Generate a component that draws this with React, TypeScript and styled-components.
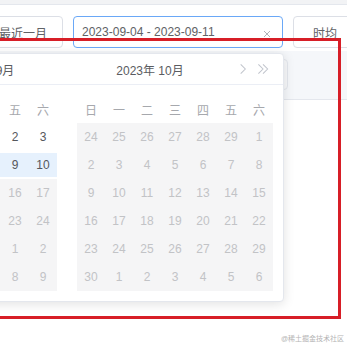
import React from "react";
import styled, { createGlobalStyle } from "styled-components";

const GlobalStyle = createGlobalStyle`
  html, body { margin: 0; padding: 0; background: #ffffff; }
  body {
    font-family: "Liberation Sans", "Noto Sans CJK SC", sans-serif;
    overflow: hidden;
  }
  * { box-sizing: border-box; }
`;

type CellState = "normal" | "muted" | "range" | "disabled" | "start" | "end";
type Side = "left" | "right";

const Page = styled.div`
  position: relative;
  width: 347px;
  height: 347px;
  overflow: hidden;
  background: #ffffff;
`;

const TopStrip = styled.div`
  height: 5px;
  background: #f2f3f5;
  border-bottom: 1px solid #e4e7ed;
`;

const Toolbar = styled.div`
  display: flex;
  align-items: center;
  gap: 10px;
  margin-left: -17px;
  padding-top: 11px;
  height: 43px;
  position: relative;
  z-index: 2;
`;

const Button = styled.button<{ $pad: number }>`
  height: 32px;
  padding: 0 ${(p) => p.$pad}px;
  border: 1px solid #dcdfe6;
  border-radius: 4px;
  background: #ffffff;
  color: #606266;
  font-family: inherit;
  font-size: 12px;
  white-space: nowrap;
  flex: none;
`;

const RangeField = styled.div`
  position: relative;
  width: 210px;
  height: 32px;
  flex: none;
  display: flex;
  align-items: center;
  padding: 0 8px;
  border: 1px solid #6aa8f7;
  border-radius: 4px;
  background: #ffffff;
  color: #606266;
  font-size: 12px;
`;

const RangeText = styled.span`
  flex: 1;
  white-space: nowrap;
`;

const ClearIcon = styled.svg`
  width: 8px;
  height: 8px;
  margin-right: 3px;
  margin-top: 4px;
  flex: none;
`;

const Popup = styled.div`
  position: absolute;
  top: 36px;
  left: -224px;
  width: 434px;
  display: flex;
  background: #ffffff;
  border: 1px solid #e4e7ed;
  border-radius: 4px;
  box-shadow: 0 2px 12px rgba(0, 0, 0, 0.12);
  z-index: 5;
`;

const Panel = styled.div`
  width: 216px;
  flex: none;
`;

const PanelHeader = styled.div<{ $side: Side }>`
  height: 31px;
  border-bottom: 1px solid #ebeef5;
  padding: 0 10px;
  display: grid;
  grid-template-columns: ${(p) => (p.$side === "left" ? "50px 1fr" : "1fr 50px")};
  align-items: center;
`;

const Title = styled.div`
  text-align: center;
  font-size: 12px;
  color: #5a5c61;
  white-space: nowrap;
`;

const Arrows = styled.div<{ $side: Side }>`
  display: flex;
  align-items: center;
  justify-content: ${(p) => (p.$side === "left" ? "flex-start" : "flex-end")};
  gap: 8px;
  padding: 0 4px;
`;

const ArrowIcon = styled.svg`
  width: 12px;
  height: 12px;
  flex: none;
`;

const PanelBody = styled.div`
  padding: 10px;
`;

const Grid = styled.div`
  display: grid;
  grid-template-columns: repeat(7, 28px);
  grid-auto-rows: 28px;
`;

const WeekDay = styled.div`
  display: flex;
  align-items: center;
  justify-content: center;
  font-size: 12px;
  color: #a6a8ad;
`;

const Cell = styled.div<{ $state: CellState }>`
  padding: 2px 0;
  background: ${(p) => (p.$state === "disabled" ? "#f5f5f6" : "transparent")};
`;

const CellInner = styled.div<{ $state: CellState }>`
  height: 24px;
  display: flex;
  align-items: center;
  justify-content: center;
  font-size: 12px;
  color: ${(p) =>
    p.$state === "disabled" || p.$state === "muted"
      ? "#c2c3c6"
      : p.$state === "start" || p.$state === "end"
      ? "#ffffff"
      : "#55575c"};
  background: ${(p) =>
    p.$state === "range"
      ? "#e6f1fd"
      : p.$state === "start" || p.$state === "end"
      ? "#409eff"
      : "transparent"};
`;

const FilterBar = styled.div`
  height: 49px;
  margin-top: 3px;
  background: #f5f7fa;
  border-bottom: 1px solid #e4e7ed;
  padding: 8px 0;
  display: flex;
`;

const FilterBox = styled.div`
  margin-left: 200px;
  width: 88px;
  height: 31px;
  border: 1px solid #e4e7ed;
  border-radius: 4px;
  background: #f7f8fa;
`;

const Annotation = styled.div`
  position: absolute;
  left: -10px;
  top: 38px;
  width: 351px;
  height: 281px;
  border: 3px solid #d71e27;
  z-index: 10;
  pointer-events: none;
`;

const Watermark = styled.div`
  position: absolute;
  right: 3px;
  bottom: 4px;
  font-size: 7px;
  color: #b4b4b4;
  white-space: nowrap;
  z-index: 11;
`;

const WEEK = ["日", "一", "二", "三", "四", "五", "六"];

type Day = { n: number; s: CellState };

const row = (nums: number[], s: CellState | CellState[]): Day[] =>
  nums.map((n, i) => ({ n, s: Array.isArray(s) ? s[i] : s }));

const septRows: Day[][] = [
  row([28, 29, 30, 31, 1, 2, 3], ["muted", "muted", "muted", "muted", "normal", "normal", "normal"]),
  row([4, 5, 6, 7, 8, 9, 10], ["start", "range", "range", "range", "range", "range", "range"]),
  row([11, 12, 13, 14, 15, 16, 17], ["end", "disabled", "disabled", "disabled", "disabled", "disabled", "disabled"]),
  row([18, 19, 20, 21, 22, 23, 24], "disabled"),
  row([25, 26, 27, 28, 29, 1, 2], "disabled"),
  row([3, 4, 5, 6, 7, 8, 9], "disabled"),
];

const octRows: Day[][] = [
  row([24, 25, 26, 27, 28, 29, 1], "disabled"),
  row([2, 3, 4, 5, 6, 7, 8], "disabled"),
  row([9, 10, 11, 12, 13, 14, 15], "disabled"),
  row([16, 17, 18, 19, 20, 21, 22], "disabled"),
  row([23, 24, 25, 26, 27, 28, 29], "disabled"),
  row([30, 1, 2, 3, 4, 5, 6], "disabled"),
];

const Chevron = ({ dir, double }: { dir: "l" | "r"; double?: boolean }) => {
  const single = (x: number) =>
    dir === "r" ? `${x},1.5 ${x + 5},6.5 ${x},11.5` : `${x + 5},1.5 ${x},6.5 ${x + 5},11.5`;
  return (
    <ArrowIcon viewBox="0 0 12 13">
      {double ? (
        <>
          <polyline points={single(1)} fill="none" stroke="#c0c4cc" strokeWidth="1.1" />
          <polyline points={single(6)} fill="none" stroke="#c0c4cc" strokeWidth="1.1" />
        </>
      ) : (
        <polyline points={single(3.5)} fill="none" stroke="#c0c4cc" strokeWidth="1.1" />
      )}
    </ArrowIcon>
  );
};

const Calendar = ({ side, title, rows }: { side: Side; title: string; rows: Day[][] }) => (
  <Panel>
    <PanelHeader $side={side}>
      {side === "left" && (
        <Arrows $side="left">
          <Chevron dir="l" double />
          <Chevron dir="l" />
        </Arrows>
      )}
      <Title>{title}</Title>
      {side === "right" && (
        <Arrows $side="right">
          <Chevron dir="r" />
          <Chevron dir="r" double />
        </Arrows>
      )}
    </PanelHeader>
    <PanelBody>
      <Grid>
        {WEEK.map((w) => (
          <WeekDay key={w}>{w}</WeekDay>
        ))}
        {rows.flat().map((d, i) => (
          <Cell key={i} $state={d.s}>
            <CellInner $state={d.s}>{d.n}</CellInner>
          </Cell>
        ))}
      </Grid>
    </PanelBody>
  </Panel>
);

export default function App() {
  return (
    <Page>
      <GlobalStyle />
      <TopStrip />
      <Toolbar>
        <Button $pad={15}>最近一月</Button>
        <RangeField>
          <RangeText>2023-09-04 - 2023-09-11</RangeText>
          <ClearIcon viewBox="0 0 8 8">
            <path d="M1 1 L7 7 M7 1 L1 7" stroke="#b0b3b8" strokeWidth="1" />
          </ClearIcon>
          <Popup>
            <Calendar side="left" title="2023年 9月" rows={septRows} />
            <Calendar side="right" title="2023年 10月" rows={octRows} />
          </Popup>
        </RangeField>
        <Button $pad={19}>时均</Button>
      </Toolbar>
      <FilterBar>
        <FilterBox />
      </FilterBar>
      <Annotation />
      <Watermark>@稀土掘金技术社区</Watermark>
    </Page>
  );
}
